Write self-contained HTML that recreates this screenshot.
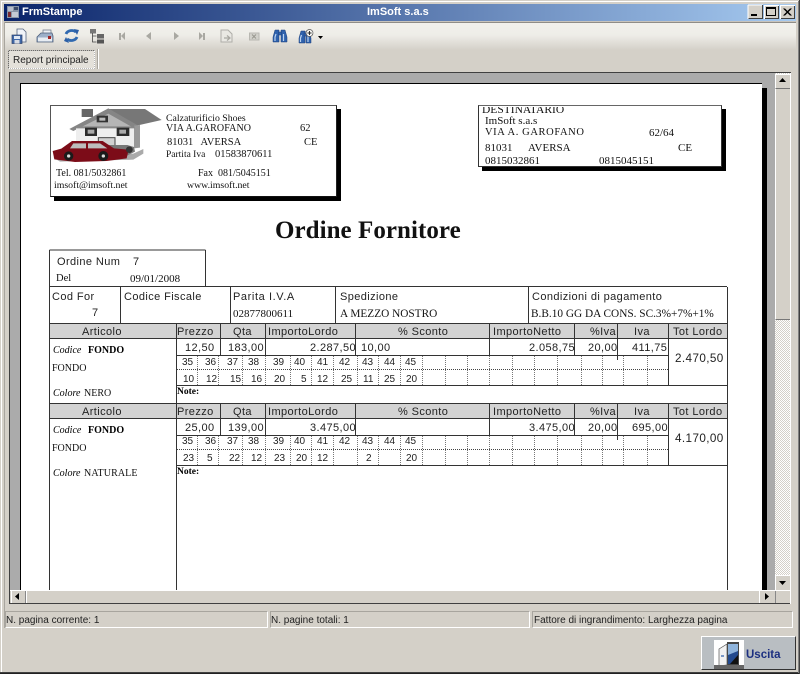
<!DOCTYPE html>
<html><head><meta charset="utf-8"><title>FrmStampe</title>
<style>
html,body{margin:0;padding:0;background:#d4d0c8}
#w{position:relative;width:800px;height:674px;overflow:hidden;background:#d4d0c8;font-family:"Liberation Sans",sans-serif;font-size:11px;color:#000}
#w div,#w svg{position:absolute}
i,b,u{position:absolute;white-space:nowrap;font-style:normal;text-decoration:none;font-weight:normal;line-height:12px;display:block}
u{margin-top:1px}
.s{font-family:"Liberation Sans",sans-serif;font-size:11px;letter-spacing:.4px;color:#222}
.d{font-family:"Liberation Sans",sans-serif;font-size:10px;color:#222}
.r{font-family:"Liberation Serif",serif;font-size:10.5px;color:#111}
.n{font-family:"Liberation Serif",serif;font-size:9.5px;font-weight:bold}
.c{font-family:"Liberation Serif",serif;font-size:10px;font-style:italic}
.f{font-family:"Liberation Serif",serif;font-size:10px;font-weight:bold;margin-top:2px}
.st{font-size:10px;color:#222}
</style></head><body>
<div id="w">
<!-- window frame -->
<div style="left:0;top:0;width:800px;height:1px;background:#d4d0c8"></div>
<div style="left:1px;top:1px;width:798px;height:1px;background:#fff"></div>
<div style="left:1px;top:1px;width:1px;height:671px;background:#fff"></div>
<div style="left:0;top:672px;width:800px;height:1px;background:#404040"></div>
<div style="left:0;top:673px;width:800px;height:1px;background:#222"></div>
<div style="left:798px;top:1px;width:1px;height:672px;background:#808080"></div>
<div style="left:799px;top:0;width:1px;height:674px;background:#404040"></div>
<!-- title bar -->
<div style="left:4px;top:4px;width:792px;height:17px;background:linear-gradient(90deg,#0a246a,#a6caf0)"></div>
<b style="left:22px;top:6px;color:#fff;font-weight:bold;font-size:11px">FrmStampe</b>
<b style="left:367px;top:6px;color:#fff;font-weight:bold;font-size:11px">ImSoft s.a.s</b>
<svg style="left:0;top:0" width="800" height="72" viewBox="0 0 800 72" shape-rendering="crispEdges">
<rect x="7" y="6" width="12" height="12" fill="#8a96a8"/><rect x="8" y="7" width="5" height="4" fill="#b8becb"/><rect x="14" y="7" width="4" height="3" fill="#3a4a6a"/><rect x="8" y="12" width="3" height="5" fill="#7a2a30"/><rect x="12" y="12" width="6" height="5" fill="#c5cad4"/>
<g>
<rect x="748" y="5" width="15" height="14" fill="#d4d0c8"/><path d="M748 5h15M748 5v14" stroke="#fff"/><path d="M748.5 18.500h14.500M762.500 5v14" stroke="#404040" fill="none"/><rect x="751" y="14" width="6" height="2" fill="#000"/>
<rect x="764" y="5" width="15" height="14" fill="#d4d0c8"/><path d="M764.500 18.500h14M778.500 5v14" stroke="#404040" fill="none"/><path d="M764 5.500h15M764.500 5v14" stroke="#fff" fill="none"/><rect x="766.500" y="7.500" width="9" height="8" fill="none" stroke="#000"/><rect x="767" y="8" width="9" height="1" fill="#000"/>
<rect x="780" y="5" width="15" height="14" fill="#d4d0c8"/><path d="M780.500 18.500h14M794.500 5v14" stroke="#404040" fill="none"/><path d="M780 5.500h15M780.500 5v14" stroke="#fff" fill="none"/>
</g>
<path d="M783.500 8.500l7 7M790.500 8.500l-7 7M784.500 8.500l7 7M791.500 8.500l-7 7" stroke="#000" fill="none" shape-rendering="auto" stroke-width=".8"/>
</svg>
<!-- toolbar -->
<div style="left:4px;top:21px;width:792px;height:1px;background:#c8c4bc"></div>
<div style="left:4px;top:22px;width:792px;height:1px;background:#8f8d88"></div>
<div style="left:4px;top:23px;width:792px;height:27px;background:linear-gradient(180deg,#f2f1ec 0%,#eeede8 45%,#d4d0c8 100%)"></div>
<div style="left:4px;top:22px;width:1px;height:606px;background:#a8a59e"></div>
<svg style="left:0;top:23px" width="340" height="27" viewBox="0 23 340 27">
<!-- save -->
<path d="M17 29h6l3 3v10h-9z" fill="#f0f3f8" stroke="#56657f" stroke-width=".8"/>
<rect x="12" y="35" width="10" height="8.500" fill="#3f68a8" stroke="#2d3f68" stroke-width=".7"/><rect x="14" y="36" width="6" height="3" fill="#dfe8f4"/><rect x="14.500" y="40" width="5" height="3.500" fill="#d8dce4"/>
<!-- print -->
<path d="M43 30h8v5h-8z" fill="#eef1f5" stroke="#6a7484" stroke-width=".7"/>
<path d="M37 37l4-4h11l1 3v6H37z" fill="#9db0c9" stroke="#4d5e7a" stroke-width=".8"/><rect x="38" y="37.500" width="14" height="4" fill="#e8edf3"/><rect x="48" y="36" width="3" height="3" fill="#a02828"/>
<!-- refresh -->
<path d="M66 34a6 5 0 0 1 10-2" fill="none" stroke="#3069b0" stroke-width="2.800"/><path d="M74 29l5 1-2 5z" fill="#2c5fa6"/>
<path d="M77 37a6 5 0 0 1-10 2" fill="none" stroke="#3069b0" stroke-width="2.800"/><path d="M69 43l-5-2 2-4z" fill="#2c5fa6"/>
<!-- tree -->
<rect x="90" y="29" width="6" height="4.500" fill="#777"/><rect x="97" y="34" width="7" height="4.500" fill="#666"/><rect x="97" y="39.500" width="7" height="4" fill="#555"/>
<path d="M92.500 33v9h4M92.500 36h4" stroke="#444" fill="none" stroke-width=".8"/>
<!-- nav -->
<g fill="#a9a8a2"><rect x="119" y="33" width="2" height="7"/><path d="M125 32v8l-4-4z"/><path d="M151 32v8l-5-4z"/><path d="M174 32v8l5-4z"/><path d="M199 32v8l4-4z"/><rect x="203" y="33" width="2" height="7"/></g>
<!-- export -->
<path d="M221 30h7l4 4v8h-11z" fill="#e9e8e3" stroke="#aeada8"/><path d="M224 38h5M227 35.500l3 2.500-3 2.500" fill="none" stroke="#a8a7a1" stroke-width="1.200"/>
<!-- stop -->
<rect x="249.500" y="33" width="9.500" height="7" fill="#d2d1cb" stroke="#b8b7b1"/><path d="M252 34.500l4 4M256 34.500l-4 4" stroke="#98978f"/>
<!-- binoculars -->
<g fill="#2f62ad" stroke="#1e3f78" stroke-width=".5"><path d="M273 42v-5l2-7h4v12z"/><path d="M281 42V30h4l2 7v5z"/><rect x="278.500" y="32" width="3" height="3"/></g>
<path d="M275 41v-4l1-3M283.500 41v-7" stroke="#bcd3f0" stroke-width="1.200" fill="none"/>
<g fill="#2f62ad" stroke="#1e3f78" stroke-width=".5"><path d="M299 43v-5l2-7h4v12z"/><path d="M306 43V31h3l2 7v5z"/><rect x="304" y="33" width="3" height="3"/></g>
<path d="M300.500 42v-4l1-3M308 42v-7" stroke="#bcd3f0" stroke-width="1.200" fill="none"/>
<circle cx="309.500" cy="33" r="3.500" fill="#f5f5f2" stroke="#555" stroke-width=".7"/><path d="M307.500 33h4M309.500 31v4" stroke="#222" stroke-width=".9"/>
<path d="M318 36h5l-2.500 3z" fill="#000"/>
</svg>
<!-- tab row -->
<div style="left:8px;top:50px;width:85px;height:17px;border:1px solid #fff;border-top-color:#6e6c67;border-left-color:#6e6c67;background:#e4e1da;outline:1px dotted #bbb;outline-offset:-1px"></div>
<b class="st" style="left:13px;top:55px">Report principale</b>
<div style="left:98px;top:49px;width:1px;height:20px;background:#fff"></div>
<div style="left:97px;top:49px;width:1px;height:20px;background:#a8a59e"></div>
<!-- preview area -->
<div style="left:9px;top:72px;width:782px;height:1px;background:#404040"></div>
<div style="left:9px;top:72px;width:1px;height:532px;background:#404040"></div>
<div style="left:10px;top:73px;width:765px;height:517px;background:#ababab"></div>
<div style="left:9px;top:603px;width:782px;height:1px;background:#404040"></div>
<div style="left:790px;top:73px;width:1px;height:531px;background:#fff"></div>
<!-- page -->
<div style="left:20px;top:83px;width:742px;height:507px;background:#fff;border-left:1px solid #000;border-top:1px solid #000;box-sizing:border-box"></div>
<div style="left:762px;top:88px;width:5px;height:502px;background:#000"></div>
<!-- v scrollbar -->
<div style="left:775px;top:73px;width:15px;height:517px;background:repeating-conic-gradient(#fff 0 25%,#d4d0c8 0 50%) 0 0/2px 2px"></div>
<div style="left:775px;top:88px;width:14px;background:#d4d0c8;border-left:1px solid #fff;border-top:1px solid #fff;border-bottom:1px solid #777;height:230px"></div>
<div style="left:775px;top:74px;width:14px;height:13px;background:#d4d0c8;border-left:1px solid #fff;border-top:1px solid #fff;border-bottom:1px solid #777"></div>
<div style="left:775px;top:575px;width:14px;height:14px;background:#d4d0c8;border-left:1px solid #fff;border-top:1px solid #fff;border-bottom:1px solid #777"></div>
<svg style="left:775px;top:74px" width="15" height="516" viewBox="0 0 15 516"><path d="M4 8h7l-3.500-4z" fill="#000"/><path d="M4 507h7l-3.500 4z" fill="#000"/></svg>
<!-- h scrollbar -->
<div style="left:10px;top:590px;width:780px;height:13px;background:#d4d0c8;border-top:1px solid #fff;box-sizing:border-box"></div>
<div style="left:11px;top:591px;width:13px;height:12px;background:#d4d0c8;border-right:1px solid #888;border-left:1px solid #fff"></div>
<div style="left:759px;top:591px;width:15px;height:12px;background:#d4d0c8;border-left:1px solid #fff;border-right:1px solid #888"></div>
<div style="left:26px;top:591px;width:1px;height:12px;background:#fff"></div>
<svg style="left:0;top:590px" width="800" height="14" viewBox="0 0 800 14"><path d="M19 3v7l-4-3.500z" fill="#000"/><path d="M765 3v7l4-3.500z" fill="#000"/></svg>
<!-- logo box -->
<div style="left:50px;top:105px;width:287px;height:92px;border:1px solid #555;border-right-color:#222;border-bottom-color:#111;box-sizing:border-box;background:#fff"></div>
<div style="left:337px;top:109px;width:4px;height:92px;background:#000"></div>
<div style="left:54px;top:197px;width:287px;height:4px;background:#000"></div>
<svg style="left:40px;top:95px" width="310" height="110" viewBox="0 0 930 330">
<path d="M205 42h110l50 33-75 17-30-5z" fill="#777"/>
<path d="M125 42h34v24h-34z" fill="#666"/>
<path d="M110 98l95-46 80 46z" fill="#b5b5b5"/>
<path d="M88 102l117-62 90 52-12 8-78-44-105 52z" fill="#858585"/>
<path d="M108 96h190v62H108z" fill="#eeeeee"/>
<path d="M282 92l18-2v68l-18 2z" fill="#999"/>
<path d="M108 94h176v6H108z" fill="#888"/>
<rect x="170" y="62" width="34" height="20" fill="#333"/><rect x="178" y="68" width="18" height="9" fill="#bbb"/>
<rect x="135" y="98" width="36" height="25" fill="#2b2b2b"/><rect x="143" y="104" width="20" height="12" fill="#aaa"/>
<rect x="230" y="98" width="38" height="25" fill="#2b2b2b"/><rect x="238" y="104" width="20" height="12" fill="#aaa"/>
<rect x="175" y="128" width="50" height="30" fill="#d0d0d0" stroke="#444" stroke-width="3"/>
<path d="M40 188l240-12 30-14v14l-30 18-220 6z" fill="#aaa"/>
<path d="M200 150h62l20 6 3 14-28 14-50-6z" fill="#777"/>
<path d="M38 168l26-7 32-23h92l34 22 44 4-6 26-60 8-95 3-62-8z" fill="#7c0c18"/>
<path d="M100 145h38v15h-48zM144 145h36l22 15h-58z" fill="#bdbdbd"/>
<circle cx="86" cy="183" r="14" fill="#1a1a1a"/><circle cx="86" cy="183" r="5" fill="#ddd"/>
<circle cx="190" cy="183" r="15" fill="#1a1a1a"/><circle cx="190" cy="183" r="5" fill="#ddd"/>
<circle cx="268" cy="164" r="10" fill="#333"/>
</svg>
<u class="r" style="left:166px;top:112px;font-size:9.800px">Calzaturificio Shoes</u>
<u class="r" style="left:166px;top:122px;font-size:10px;letter-spacing:.1px">VIA A.GAROFANO</u>
<u class="r" style="left:300px;top:122px">62</u>
<u class="r" style="left:167px;top:136px;white-space:pre">81031   AVERSA</u>
<u class="r" style="left:304px;top:136px">CE</u>
<u class="r" style="left:166px;top:148px;font-size:9.500px">Partita Iva</u>
<u class="r" style="left:215px;top:148px">01583870611</u>
<u class="r" style="left:56px;top:167px;font-size:10px">Tel. 081/5032861</u>
<u class="r" style="left:198px;top:167px;font-size:10px">Fax&nbsp; 081/5045151</u>
<u class="r" style="left:54px;top:179px;font-size:9.800px">imsoft@imsoft.net</u>
<u class="r" style="left:187px;top:179px;font-size:9.800px">www.imsoft.net</u>
<!-- destination box -->
<div style="left:478px;top:105px;width:244px;height:62px;border:1px solid #333;border-top-color:#666;box-sizing:border-box;background:#fff"></div>
<div style="left:722px;top:109px;width:4px;height:62px;background:#000"></div>
<div style="left:482px;top:167px;width:244px;height:4px;background:#000"></div>
<u class="r" style="left:482px;top:103px;font-size:11.500px;clip-path:inset(3px 0 0 0)">DESTINATARIO</u>
<u class="r" style="left:485px;top:114px;font-size:11px">ImSoft s.a.s</u>
<u class="r" style="left:485px;top:126px;letter-spacing:.6px">VIA A. GAROFANO</u>
<u class="r" style="left:649px;top:126px;font-size:11px">62/64</u>
<u class="r" style="left:485px;top:141px;font-size:11px">81031</u>
<u class="r" style="left:528px;top:141px;font-size:11px">AVERSA</u>
<u class="r" style="left:678px;top:141px;font-size:11px">CE</u>
<u class="r" style="left:485px;top:154px;font-size:11px">0815032861</u>
<u class="r" style="left:599px;top:154px;font-size:11px">0815045151</u>
<!-- title -->
<u style="left:275px;top:216px;line-height:28px;font-family:'Liberation Serif',serif;font-weight:bold;font-size:25px;color:#111;letter-spacing:.05px">Ordine Fornitore</u>
<!-- grid -->
<div style="left:49px;top:323px;width:678px;height:16px;background:#d3d3d3"></div>
<div style="left:49px;top:404px;width:678px;height:15px;background:#d3d3d3"></div>
<svg style="left:0;top:0" width="800" height="590" viewBox="0 0 800 590" shape-rendering="crispEdges" fill="none">
<path stroke="#333" d="M49.500 250h156M49.500 250v337M205.500 250v37M49 286.500h678M727.500 287v303M49.500 287v303M120.500 287v36M230.500 287v36M335.500 287v36M528.500 287v36M49 323.500h679M49 338.500h679M176.500 323v267M220.500 323v32M265.500 323v32M355.500 323v32M489.500 323v32M574.500 323v32M617.500 323v37M668.500 323v62M176 355.500h492M176 385.500h552M49 403.500h679M49 418.500h679M220.500 403v32M265.500 403v32M355.500 403v15M489.500 403v32M574.500 403v32M617.500 403v37M668.500 403v62M176 435.500h492M176 465.500h552M355.500 418v17"/>
<path stroke="#444" stroke-dasharray="1 1" d="M177 369.500h491M177 449.500h491"/>
<path stroke="#777" stroke-dasharray="1 1" d="M197.500 356v29M218.500 356v29M242.500 356v29M265.500 356v29M290.500 356v29M311.500 356v29M333.500 356v29M357.500 356v29M378.500 356v29M400.500 356v29M422.500 356v29M445.500 356v29M467.500 356v29M489.500 356v29M512.500 356v29M534.500 356v29M557.500 356v29M581.500 356v29M602.500 356v29M623.500 356v29M647.500 356v29M197.500 436v29M218.500 436v29M242.500 436v29M265.500 436v29M290.500 436v29M311.500 436v29M333.500 436v29M357.500 436v29M378.500 436v29M400.500 436v29M422.500 436v29M445.500 436v29M467.500 436v29M489.500 436v29M512.500 436v29M534.500 436v29M557.500 436v29M581.500 436v29M602.500 436v29M623.500 436v29M647.500 436v29"/>
</svg>
<!-- order box -->
<u class="s" style="left:57px;top:255px">Ordine Num</u><u class="s" style="left:133px;top:255px">7</u>
<u class="r" style="left:56px;top:272px">Del</u><u class="r" style="left:130px;top:272px;font-size:11px">09/01/2008</u>
<u class="s" style="left:52px;top:290px">Cod For</u><u class="s" style="left:92px;top:306px">7</u>
<u class="s" style="left:124px;top:290px">Codice Fiscale</u>
<u class="s" style="left:233px;top:290px;letter-spacing:.6px">Parita I.V.A</u><u class="r" style="left:233px;top:307px;font-size:11px">02877800611</u>
<u class="s" style="left:340px;top:290px">Spedizione</u><u class="r" style="left:340px;top:307px;font-size:11.300px">A MEZZO NOSTRO</u>
<u class="s" style="left:532px;top:290px">Condizioni di pagamento</u><u class="r" style="left:531px;top:307px;font-size:11.300px">B.B.10 GG DA CONS. SC.3%+7%+1%</u>
<!-- header 1 -->
<u class="s" style="left:82px;top:325px">Articolo</u><u class="s" style="left:177px;top:325px">Prezzo</u><u class="s" style="left:233px;top:325px">Qta</u><u class="s" style="left:268px;top:325px">ImportoLordo</u><u class="s" style="left:398px;top:325px">% Sconto</u><u class="s" style="left:493px;top:325px">ImportoNetto</u><u class="s" style="left:590px;top:325px">%Iva</u><u class="s" style="left:634px;top:325px">Iva</u><u class="s" style="left:673px;top:325px">Tot Lordo</u>
<!-- row 1 -->
<u class="s" style="left:185px;top:341px">12,50</u><u class="s" style="left:228px;top:341px">183,00</u><u class="s" style="left:310px;top:341px">2.287,50</u><u class="s" style="left:361px;top:341px">10,00</u><u class="s" style="left:529px;top:341px">2.058,75</u><u class="s" style="left:588px;top:341px">20,00</u><u class="s" style="left:632px;top:341px">411,75</u>
<u class="s" style="left:675px;top:352px;font-size:11.700px">2.470,50</u>
<u class="d" style="left:182px;top:356px">35</u><u class="d" style="left:205px;top:356px">36</u><u class="d" style="left:227px;top:356px">37</u><u class="d" style="left:248px;top:356px">38</u><u class="d" style="left:273px;top:356px">39</u><u class="d" style="left:294px;top:356px">40</u><u class="d" style="left:317px;top:356px">41</u><u class="d" style="left:339px;top:356px">42</u><u class="d" style="left:362px;top:356px">43</u><u class="d" style="left:384px;top:356px">44</u><u class="d" style="left:405px;top:356px">45</u>
<u class="d" style="left:183px;top:373px">10</u><u class="d" style="left:206px;top:373px">12</u><u class="d" style="left:230px;top:373px">15</u><u class="d" style="left:251px;top:373px">16</u><u class="d" style="left:274px;top:373px">20</u><u class="d" style="left:301px;top:373px">5</u><u class="d" style="left:317px;top:373px">12</u><u class="d" style="left:341px;top:373px">25</u><u class="d" style="left:363px;top:373px">11</u><u class="d" style="left:384px;top:373px">25</u><u class="d" style="left:406px;top:373px">20</u>
<u class="c" style="left:53px;top:344px">Codice</u><u class="f" style="left:88px;top:343px">FONDO</u><u class="r" style="left:52px;top:362px;font-size:10px">FONDO</u><u class="c" style="left:53px;top:387px">Colore</u><u class="r" style="left:84px;top:387px;font-size:10px">NERO</u>
<u class="n" style="left:177px;top:385px">Note:</u>
<!-- header 2 -->
<u class="s" style="left:82px;top:405px">Articolo</u><u class="s" style="left:177px;top:405px">Prezzo</u><u class="s" style="left:233px;top:405px">Qta</u><u class="s" style="left:268px;top:405px">ImportoLordo</u><u class="s" style="left:398px;top:405px">% Sconto</u><u class="s" style="left:493px;top:405px">ImportoNetto</u><u class="s" style="left:590px;top:405px">%Iva</u><u class="s" style="left:634px;top:405px">Iva</u><u class="s" style="left:673px;top:405px">Tot Lordo</u>
<!-- row 2 -->
<u class="s" style="left:185px;top:421px">25,00</u><u class="s" style="left:228px;top:421px">139,00</u><u class="s" style="left:310px;top:421px">3.475,00</u><u class="s" style="left:529px;top:421px">3.475,00</u><u class="s" style="left:588px;top:421px">20,00</u><u class="s" style="left:632px;top:421px">695,00</u>
<u class="s" style="left:675px;top:432px;font-size:11.700px">4.170,00</u>
<u class="d" style="left:182px;top:435px">35</u><u class="d" style="left:205px;top:435px">36</u><u class="d" style="left:227px;top:435px">37</u><u class="d" style="left:248px;top:435px">38</u><u class="d" style="left:273px;top:435px">39</u><u class="d" style="left:294px;top:435px">40</u><u class="d" style="left:317px;top:435px">41</u><u class="d" style="left:339px;top:435px">42</u><u class="d" style="left:362px;top:435px">43</u><u class="d" style="left:384px;top:435px">44</u><u class="d" style="left:405px;top:435px">45</u>
<u class="d" style="left:183px;top:452px">23</u><u class="d" style="left:207px;top:452px">5</u><u class="d" style="left:229px;top:452px">22</u><u class="d" style="left:251px;top:452px">12</u><u class="d" style="left:274px;top:452px">23</u><u class="d" style="left:296px;top:452px">20</u><u class="d" style="left:317px;top:452px">12</u><u class="d" style="left:366px;top:452px">2</u><u class="d" style="left:406px;top:452px">20</u>
<u class="c" style="left:53px;top:424px">Codice</u><u class="f" style="left:88px;top:423px">FONDO</u><u class="r" style="left:52px;top:442px;font-size:10px">FONDO</u><u class="c" style="left:53px;top:467px">Colore</u><u class="r" style="left:84px;top:467px;font-size:10px;letter-spacing:.1px">NATURALE</u>
<u class="n" style="left:177px;top:465px">Note:</u>
<!-- status bar -->
<div style="left:5px;top:611px;width:263px;height:17px;border:1px solid #fff;border-top-color:#a8a59e;border-left-color:#a8a59e;box-sizing:border-box"></div>
<div style="left:270px;top:611px;width:260px;height:17px;border:1px solid #fff;border-top-color:#a8a59e;border-left-color:#a8a59e;box-sizing:border-box"></div>
<div style="left:532px;top:611px;width:261px;height:17px;border:1px solid #fff;border-top-color:#a8a59e;border-left-color:#a8a59e;box-sizing:border-box"></div>
<b class="st" style="left:6px;top:615px">N. pagina corrente: 1</b>
<b class="st" style="left:271px;top:615px">N. pagine totali: 1</b>
<b class="st" style="left:534px;top:615px">Fattore di ingrandimento: Larghezza pagina</b>
<!-- exit button -->
<div style="left:701px;top:636px;width:95px;height:34px;background:#b9bec2;border-top:1px solid #fff;border-left:1px solid #fff;border-right:1px solid #333;border-bottom:1px solid #333;box-sizing:border-box"></div>
<svg style="left:714px;top:640px" width="30" height="30" viewBox="0 0 30 30">
<rect width="30" height="29" fill="#fff"/>
<path d="M13 2h12v23H13z" fill="#444"/><path d="M14 4h10v20H14z" fill="#234a8e"/><path d="M14 4h10v7l-10 4z" fill="#8fb4dc"/><path d="M16 24l8-9v9z" fill="#111"/>
<path d="M5 9l8-5v21l-8 1z" fill="#f2f2f2" stroke="#555" stroke-width=".7"/><path d="M7 16h3" stroke="#2a5ca8" stroke-width="1.200"/>
<rect y="25" width="30" height="4" fill="#666"/>
</svg>
<b style="left:746px;top:649px;font-weight:bold;font-size:11.500px;color:#1c2f80">Uscita</b>
</div>
</body></html>
